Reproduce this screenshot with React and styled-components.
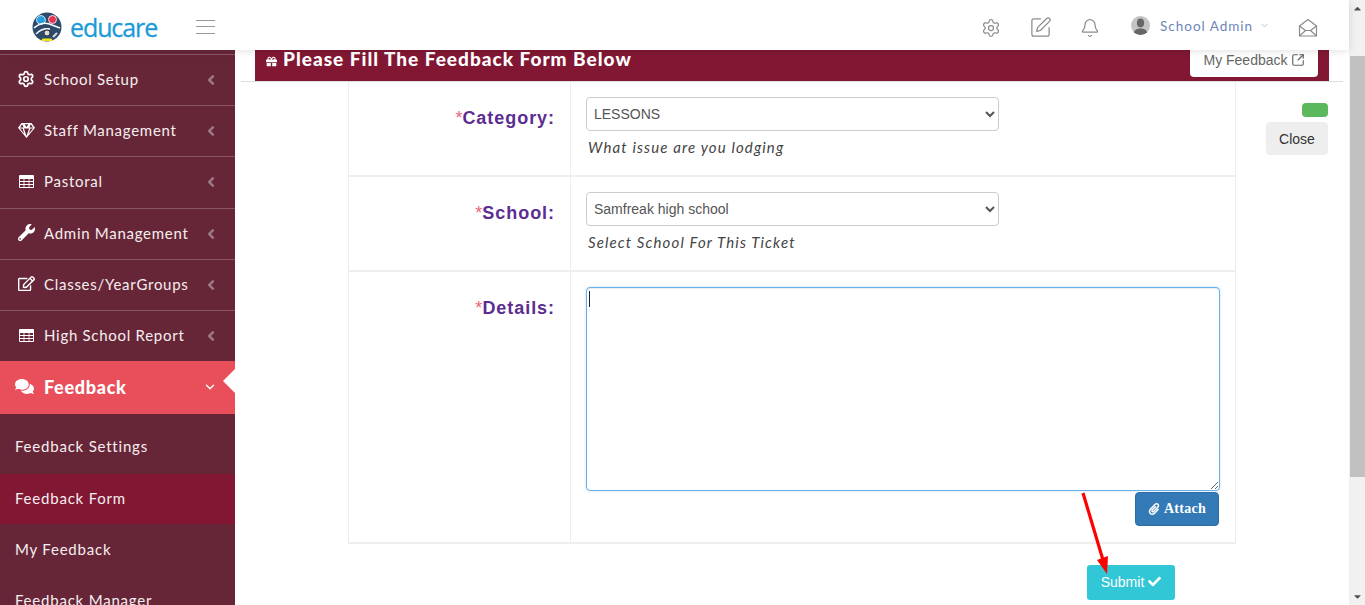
import React from 'react';
import styled, { createGlobalStyle } from 'styled-components';
import { FaWrench, FaRegEdit, FaComments, FaAngleLeft, FaGift, FaPaperclip, FaCheck, FaCaretUp, FaCaretDown } from 'react-icons/fa';
import { Settings, SquarePen, Bell, SquareArrowOutUpRight, ChevronDown } from 'lucide-react';

const Global = createGlobalStyle`
  html, body { margin: 0; padding: 0; height: 605px; overflow: hidden; background: #fff; }
  * { box-sizing: border-box; }
`;
const Page = styled.div`
  position: relative; display: flex; width: 1365px; height: 605px; overflow: hidden;
  font-family: Lato, "Liberation Sans", sans-serif;
`;
const Viewport = styled.div`display: flex; flex-direction: column; width: 1349px; height: 605px;`;
const Header = styled.header`
  position: relative; z-index: 3; flex: none; height: 50px; background: #fff;
  display: flex; align-items: center; box-shadow: 0 1px 8px rgba(0,0,0,.12);
`;
const Brand = styled.div`display: flex; align-items: center; width: 196px; padding: 4px 0 0 32px; gap: 8px;`;
const BrandName = styled.span`
  font-family: "Open Sans", sans-serif; font-size: 25px; line-height: 30px; color: #1b9bd7; letter-spacing: -1.1px; -webkit-text-stroke: .3px #1b9bd7;
`;
const Burger = styled.button`
  display: flex; flex-direction: column; gap: 5.5px; width: 19px; padding: 0; border: 0; background: none; margin-top: 3px;
  span { display: block; height: 1px; background: #999; }
`;
const HeaderRight = styled.div`display: flex; align-items: center; margin-left: auto; padding-right: 31px; color: #8c8c8c;`;
const HeaderIcon = styled.span`display: flex; margin-left: ${p => p.$gap || 0}px; margin-top: 5px;`;
const Avatar = styled.span`
  display: block; overflow: hidden; width: 19px; height: 19px; border-radius: 50%; background: #c4c4c4; margin-left: 31px; margin-top: 1px;
`;
const AdminName = styled.span`font-size: 13.5px; letter-spacing: .98px; color: #6d85b8; margin-left: 10px; margin-top: 1px;`;
const AdminCaret = styled.span`display: flex; margin: 1px 0 0 6px;`;
const Body = styled.div`flex: 1; display: flex; min-height: 0;`;
const Sidebar = styled.nav`flex: none; width: 235px; background: #672637; padding-top: 4px; overflow: hidden;`;
const MenuItem = styled.div`
  display: flex; align-items: center; height: 51.2px; border-top: 1px solid #8a5665; padding: 0 17px 2px 17px; color: #f5eef0; font-size: 15px; letter-spacing: .72px;
`;
const MenuIcon = styled.span`display: flex; justify-content: center; width: 18px; margin-right: 9px; color: #fff; font-size: 17px;`;
const MenuLabel = styled.span`flex: 1; white-space: nowrap;`;
const Chevron = styled.span`display: flex; color: #9c7a84; font-size: 16px; margin-right: -1px; margin-top: 2px;`;
const ActiveItem = styled.div`
  position: relative; display: flex; align-items: center; height: 53px; background: #e94f5b; color: #fff; padding: 0 18px 2px 15px; font-weight: 900; font-size: 18px; letter-spacing: .7px;
  &::after { content: ''; position: absolute; right: 0; top: 8px; border: 12px solid transparent; border-right-color: #fff; border-left: 0; }
`;
const ActiveIcon = styled.span`display: flex; width: 19px; margin-right: 10px; font-size: 19px;`;
const SubItem = styled.div`
  display: flex; align-items: center; height: ${p => p.$h || 51}px; padding: ${p => p.$top || 0}px 15px ${p => p.$bottom || 0}px; background: ${p => p.$active ? '#821733' : 'transparent'}; color: #f5eef0; font-size: 15px; letter-spacing: .79px; white-space: nowrap;
`;
const Main = styled.main`flex: 1; min-width: 0; display: flex; flex-direction: column;`;
const TitleWrap = styled.div`flex: none; margin: 0 6px; padding: 0 14px; border-bottom: 1px solid #ddd; height: 32px;`;
const TitleBar = styled.div`
  display: flex; align-items: flex-start; height: 31px; background: #821733; color: #fff; padding: 0 11px;
`;
const GiftIcon = styled.span`display: flex; font-size: 11px; margin: 6px 6px 0 0;`;
const Title = styled.h2`margin: 0; font-size: 19px; line-height: 18px; font-weight: 900; letter-spacing: 1px; white-space: nowrap;`;
const MyFeedback = styled.button`
  display: flex; align-items: center; gap: 3px; margin-left: auto; height: 27px; width: 128px; justify-content: center; padding: 0 0 7px;
  background: #fff; border: 0; border-radius: 0 0 4px 4px; color: #666; font: 14px "Liberation Sans", sans-serif;
`;
const Content = styled.div`flex: 1; display: flex; align-items: flex-start; padding-left: 113px;`;
const FormColumn = styled.div`flex: none; width: 888px;`;
const FormTable = styled.div`border: solid #eee; border-width: 0 1px 2px 1px;`;
const Row = styled.div`
  display: grid; grid-template-columns: 222px 1fr; height: ${p => p.$h}px; border-top: ${p => p.$first ? 0 : '2px solid #eee'};
`;
const LabelCell = styled.div`border-right: 1px solid #eee; padding: 24px 15px 0 0; text-align: right;`;
const Label = styled.label`
  font: bold 18px/24px "Liberation Sans", sans-serif; letter-spacing: .95px; color: #5c2d91;
  i { font-style: normal; font-weight: 400; color: #e8697a; letter-spacing: 0; }
`;
const FieldCell = styled.div`padding: 15px 15px 0 15px;`;
const Select = styled.select`
  display: block; width: 413px; height: 34px; border: 1px solid #ccc; border-radius: 4px; padding: 0 3px; color: #555; font: 14px "Liberation Sans", sans-serif; background: #fff;
`;
const Hint = styled.div`margin-top: 6px; font-style: italic; font-size: 15px; line-height: 20px; color: #444; letter-spacing: 1.13px; padding-left: 2px;`;
const TextWrap = styled.div`
  position: relative; width: 634px; height: 204px;
  &::before { content: ''; position: absolute; left: 3px; top: 4px; width: 1px; height: 16px; background: #222; }
`;
const TextArea = styled.textarea`
  display: block; width: 100%; height: 100%; margin: 0; border: 1px solid #66afe9; border-radius: 4px; outline: 0; box-shadow: inset 0 1px 1px rgba(0,0,0,.075), 0 0 3px rgba(102,175,233,.35);
`;
const AttachRow = styled.div`display: flex; justify-content: flex-end; width: 633px; margin-top: 1px;`;
const AttachBtn = styled.button`
  display: flex; align-items: center; justify-content: center; gap: 4px; width: 84px; height: 34px; background: #337ab7; border: 1px solid #2e6da4; border-radius: 4px; color: #fff; font: bold 14px "Liberation Serif", serif; letter-spacing: .3px;
`;
const SubmitRow = styled.div`display: flex; justify-content: flex-end; padding: 21px 61px 0 0;`;
const SubmitBtn = styled.button`
  display: flex; align-items: center; justify-content: center; gap: 4px; width: 88px; height: 35px; padding: 0 0 2px; background: #31c7d6; border: 0; border-radius: 3px; color: #fff; font: 14px "Liberation Sans", sans-serif;
`;
const RightColumn = styled.div`flex: 1; display: flex; flex-direction: column; align-items: flex-end; padding: 21px 21px 0 0;`;
const Badge = styled.span`display: block; width: 26px; height: 14px; background: #5cb85c; border-radius: 4px;`;
const CloseBtn = styled.button`width: 62px; height: 33px; margin-top: 5px; background: #eee; border: 0; border-radius: 4px; color: #333; font: 14px "Liberation Sans", sans-serif;`;
const Scrollbar = styled.div`flex: none; display: flex; flex-direction: column; align-items: center; width: 16px; height: 605px; background: #f1f1f1; color: #505050; font-size: 11px;`;
const ScrollArrow = styled.span`display: flex; align-items: center; justify-content: center; height: ${p => p.$h}px;`;
const Thumb = styled.span`display: block; width: 15px; height: 421px; margin: 39px 0 0 1px; background: #c1c1c1;`;
const Spacer = styled.span`flex: 1;`;
const ArrowOverlay = styled.svg`position: absolute; left: 1075px; top: 488px; z-index: 4; pointer-events: none;`;

const TableIcon = () => (
  <svg width="15" height="13" viewBox="0 0 15 13">
    <path fill="#fff" fillRule="evenodd" d="M1 0h13a1 1 0 0 1 1 1v11a1 1 0 0 1-1 1H1a1 1 0 0 1-1-1V1a1 1 0 0 1 1-1zM1 4v2h3.6V4zM5.4 4v2h4.2V4zM10.4 4v2H14V4zM1 7v2h3.6V7zM5.4 7v2h4.2V7zM10.4 7v2H14V7zM1 10v2h3.6v-2zM5.4 10v2h4.2v-2zM10.4 10v2H14v-2z" />
  </svg>
);

const GemIcon = () => (
  <svg width="17" height="15" viewBox="0 0 17 15">
    <path fill="#fff" fillRule="evenodd" d="M3.5 0h10L17 4.8 8.5 15 0 4.8zM4.2 1.3L2 4.4h3.6zM6.6 1.3L8.5 4l1.9-2.7zM12.8 1.3l-1.4 3.1H15zM1.9 5.6l4.4 5.2-1.7-5.2zM5.9 5.6l2.6 7.4 2.6-7.4zM12.4 5.6l-1.7 5.2 4.4-5.2z" />
  </svg>
);

const items = [
  ['School Setup', <Settings size={18} strokeWidth={2.3} />],
  ['Staff Management', <GemIcon />],
  ['Pastoral', <TableIcon />],
  ['Admin Management', <FaWrench />],
  ['Classes/YearGroups', <FaRegEdit />],
  ['High School Report', <TableIcon />],
];

const Logo = () => (
  <svg width="30" height="30" viewBox="0 0 30 30">
    <circle cx="15" cy="15" r="14.5" fill="#2d4a6d" />
    <circle cx="9" cy="8" r="4.4" fill="#1f9ee0" stroke="#fff" strokeWidth=".8" />
    <circle cx="20.5" cy="7.5" r="4" fill="#e8344f" stroke="#fff" strokeWidth=".8" />
    <path d="M2 16c6-5 12-6 18-3l8 3" fill="none" stroke="#fff" strokeWidth="1.6" />
    <path d="M4 22c4-4 9-6 14-5" fill="none" stroke="#fff" strokeWidth="1.4" />
    <circle cx="15" cy="21" r="3" fill="#ddd" stroke="#333" />
    <path d="M9 29h12l-1.5-2.5h-9z" fill="#f2e21c" />
    <path d="M21 25l4-4" stroke="#ddd" strokeWidth="2" />
  </svg>
);

const MailIcon = () => (
  <svg width="20" height="20" viewBox="0 0 20 20" fill="none" stroke="#8c8c8c" strokeWidth="1.2" strokeLinejoin="round">
    <path d="M1.5 8L10 1.5 18.5 8v10h-17z" />
    <path d="M1.5 18L7.5 12.5h5L18.5 18" />
    <path d="M1.5 8l6 4.5M18.5 8l-6 4.5" />
  </svg>
);

export default function App() {
  return (
    <Page>
      <Global />
      <Viewport>
        <Header>
          <Brand><Logo /><BrandName>educare</BrandName></Brand>
          <Burger><span /><span /><span /></Burger>
          <HeaderRight>
            <HeaderIcon><Settings size={20} strokeWidth={1.5} /></HeaderIcon>
            <HeaderIcon $gap={28}><SquarePen size={23} strokeWidth={1.3} /></HeaderIcon>
            <HeaderIcon $gap={28}><Bell size={20} strokeWidth={1.5} /></HeaderIcon>
            <Avatar>
              <svg width="19" height="19" viewBox="0 0 19 19"><ellipse cx="9.5" cy="7" rx="3.6" ry="4.4" fill="#666" /><path d="M2.5 19c0-5 3-6.5 7-6.5s7 1.5 7 6.5z" fill="#666" /></svg>
            </Avatar>
            <AdminName>School Admin</AdminName>
            <AdminCaret><ChevronDown size={11} color="#b5bcc8" /></AdminCaret>
            <HeaderIcon $gap={28}><MailIcon /></HeaderIcon>
          </HeaderRight>
        </Header>
        <Body>
          <Sidebar>
            {items.map(([label, icon]) => (
              <MenuItem key={label}>
                <MenuIcon>{icon}</MenuIcon>
                <MenuLabel>{label}</MenuLabel>
                <Chevron><FaAngleLeft /></Chevron>
              </MenuItem>
            ))}
            <ActiveItem>
              <ActiveIcon><FaComments /></ActiveIcon>
              <MenuLabel>Feedback</MenuLabel>
              <ChevronDown size={14} strokeWidth={2.4} />
            </ActiveItem>
            <SubItem $h={60} $top={3}>Feedback Settings</SubItem>
            <SubItem $active $h={50} $bottom={2}>Feedback Form</SubItem>
            <SubItem $bottom={2}>My Feedback</SubItem>
            <SubItem $bottom={2}>Feedback Manager</SubItem>
          </Sidebar>
          <Main>
            <TitleWrap>
              <TitleBar>
                <GiftIcon><FaGift /></GiftIcon>
                <Title>Please Fill The Feedback Form Below</Title>
                <MyFeedback>My Feedback <SquareArrowOutUpRight size={14} strokeWidth={2} /></MyFeedback>
              </TitleBar>
            </TitleWrap>
            <Content>
              <FormColumn>
                <FormTable>
                  <Row $first $h={93}>
                    <LabelCell><Label><i>*</i>Category:</Label></LabelCell>
                    <FieldCell>
                      <Select defaultValue="LESSONS"><option>LESSONS</option></Select>
                      <Hint>What issue are you lodging</Hint>
                    </FieldCell>
                  </Row>
                  <Row $h={95}>
                    <LabelCell><Label><i>*</i>School:</Label></LabelCell>
                    <FieldCell>
                      <Select defaultValue="Samfreak high school"><option>Samfreak high school</option></Select>
                      <Hint>Select School For This Ticket</Hint>
                    </FieldCell>
                  </Row>
                  <Row $h={272}>
                    <LabelCell><Label><i>*</i>Details:</Label></LabelCell>
                    <FieldCell>
                      <TextWrap><TextArea readOnly /></TextWrap>
                      <AttachRow><AttachBtn><FaPaperclip size={12} />Attach</AttachBtn></AttachRow>
                    </FieldCell>
                  </Row>
                </FormTable>
                <SubmitRow><SubmitBtn>Submit <FaCheck size={13} /></SubmitBtn></SubmitRow>
              </FormColumn>
              <RightColumn><Badge /><CloseBtn>Close</CloseBtn></RightColumn>
            </Content>
          </Main>
        </Body>
      </Viewport>
      <Scrollbar>
        <ScrollArrow $h={17}><FaCaretUp /></ScrollArrow>
        <Thumb />
        <Spacer />
        <ScrollArrow $h={17}><FaCaretDown /></ScrollArrow>
      </Scrollbar>
      <ArrowOverlay width="50" height="95" viewBox="0 0 50 95">
        <path d="M8 5L28 72" stroke="#f00" strokeWidth="3.2" />
        <path d="M32 86L22 72L33 68z" fill="#f00" />
      </ArrowOverlay>
    </Page>
  );
}
